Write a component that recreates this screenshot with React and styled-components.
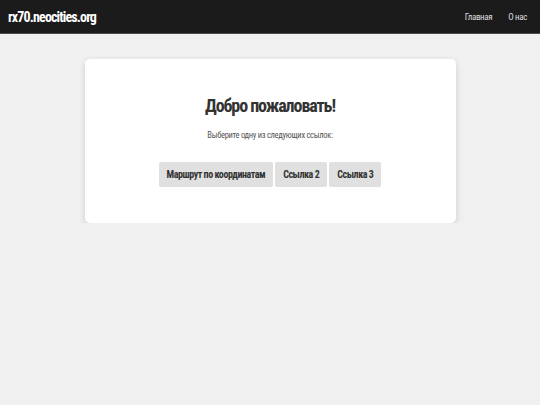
import React from 'react';
import styled, { createGlobalStyle } from 'styled-components';

const GlobalStyle = createGlobalStyle`
  html, body {
    margin: 0;
    padding: 0;
    background: #f0f0f0;
    font-family: Roboto, 'Liberation Sans', Arial, sans-serif;
    font-stretch: 75%;
    color: #333;
  }
`;

const Header = styled.header`
  display: flex;
  align-items: center;
  justify-content: space-between;
  height: 33px;
  padding: 0 13px 0 8px;
  background: #1b1b1b;
  border-bottom: 1px solid #4a4a4a;
`;

const Logo = styled.div`
  color: #fff;
  font-size: 14px;
  font-weight: bold;
  letter-spacing: -0.06em;
`;

const Nav = styled.nav`
  display: flex;
  gap: 16px;
`;

const NavLink = styled.a`
  color: #ddd;
  font-size: 9px;
  letter-spacing: -0.04em;
  text-decoration: none;
`;

const Main = styled.main`
  display: flex;
  justify-content: center;
  padding-top: 25px;
`;

const Card = styled.section`
  width: 371px;
  box-sizing: border-box;
  padding: 36px 20px 36px;
  background: #fff;
  border-radius: 5px;
  box-shadow: 0 2px 6px rgba(0, 0, 0, 0.15);
  text-align: center;
`;

const Title = styled.h1`
  margin: 0;
  font-size: 18px;
  font-weight: bold;
  letter-spacing: -0.06em;
  color: #333;
`;

const Subtitle = styled.p`
  margin: 14px 0 0;
  font-size: 8.5px;
  letter-spacing: -0.035em;
  color: #555;
`;

const Buttons = styled.div`
  display: flex;
  justify-content: center;
  gap: 2px;
  margin-top: 22px;
`;

const Button = styled.a`
  display: inline-flex;
  align-items: center;
  height: 25px;
  padding: 0 8px;
  background: #e0e0e0;
  border-radius: 2px;
  color: #333;
  font-size: 10px;
  font-weight: bold;
  letter-spacing: -0.045em;
  text-decoration: none;
`;

const links = ['Маршрут по координатам', 'Ссылка 2', 'Ссылка 3'];

const App = () => (
  <>
    <GlobalStyle />
    <Header>
      <Logo>rx70.neocities.org</Logo>
      <Nav>
        <NavLink href="#">Главная</NavLink>
        <NavLink href="#">О нас</NavLink>
      </Nav>
    </Header>
    <Main>
      <Card>
        <Title>Добро пожаловать!</Title>
        <Subtitle>Выберите одну из следующих ссылок:</Subtitle>
        <Buttons>
          {links.map(label => (
            <Button href="#" key={label}>
              {label}
            </Button>
          ))}
        </Buttons>
      </Card>
    </Main>
  </>
);

export default App;
